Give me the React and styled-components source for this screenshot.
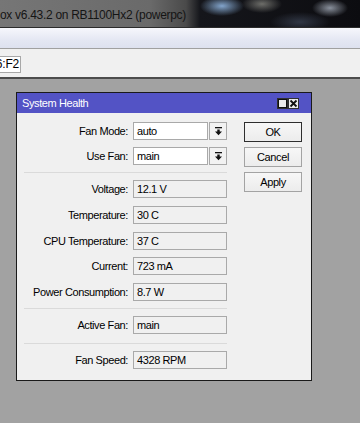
import React from 'react';
import styled, { createGlobalStyle } from 'styled-components';

const GlobalStyle = createGlobalStyle`
html, body {
    margin: 0;
    padding: 0;
    background: #a2a2a2;
    overflow: hidden;
}
* {
    box-sizing: border-box;
}
`;

const Page = styled.div`
display: flex;
flex-direction: column;
width: 360px;
height: 423px;
overflow: hidden;
font-family: "Liberation Sans", Arial, sans-serif;
font-size: 11px;
letter-spacing: -0.4px;
color: #000;
`;

const WinTitle = styled.div`
height: 27px;
display: flex;
align-items: center;
white-space: nowrap;
overflow: hidden;
font-size: 12px;
letter-spacing: -0.3px;
color: #151515;
background:
    radial-gradient(ellipse 22px 10px at 222px 6px, rgba(150, 190, 235, 0.85), transparent),
    radial-gradient(ellipse 20px 9px at 262px 4px, rgba(170, 170, 160, 0.6), transparent),
    radial-gradient(ellipse 18px 9px at 330px 8px, rgba(190, 200, 215, 0.7), transparent),
    radial-gradient(ellipse 30px 10px at 300px 22px, rgba(70, 80, 100, 0.6), transparent),
    linear-gradient(90deg, #767676 0, #6a6a6a 150px, #4a4a4a 186px, #15161b 200px, #0c0c10 100%);
span {
    padding-top: 2px;
}
`;

const Rule = styled.div`
height: ${p => p.$h || 1}px;
background: ${p => p.$color};
`;

const MenuBar = styled.div`
height: 20px;
background: linear-gradient(#f6f7fc, #e4e7f3 60%, #dde1ef);
`;

const Toolbar = styled.div`
height: 28px;
background: #f0f0f0;
padding-top: 7px;
`;

const AddrBox = styled.div`
width: 21px;
height: 17px;
background: #fff;
border: 1px solid #a8a8a8;
border-left: none;
display: flex;
justify-content: flex-end;
padding-right: 1px;
font-size: 12px;
letter-spacing: -0.2px;
line-height: 15px;
white-space: nowrap;
overflow: hidden;
span {
    flex-shrink: 0;
}
`;

const Desktop = styled.div`
flex: 1;
background: #a2a2a2;
padding: 13px 0 0 16px;
`;

const Dialog = styled.div`
width: 296px;
border: 1px solid #1a1a1a;
background: #f0f0f0;
`;

const TitleBar = styled.div`
height: 20px;
background: #5353c5;
color: #fff;
display: flex;
align-items: center;
padding: 0 12px 0 5px;
font-size: 11px;
`;

const TitleText = styled.div`
flex: 1;
`;

const TitleButton = styled.div`
width: 11px;
height: 11px;
background: #ececec;
border: 1px solid #303030;
display: flex;
align-items: center;
justify-content: center;
svg {
    display: block;
}
`;

const Body = styled.div`
display: flex;
padding-bottom: 11px;
`;

const FormColumn = styled.div`
width: 211px;
display: flex;
flex-direction: column;
`;

const Section = styled.div`
display: flex;
flex-direction: column;
gap: ${p => p.$gap || 7}px;
padding: ${p => p.$pt}px 0 ${p => p.$pb}px;
`;

const Separator = styled.div`
height: 1px;
margin-left: 7px;
width: 203px;
background: #dadada;
`;

const Row = styled.div`
display: flex;
align-items: center;
height: 18px;
`;

const Label = styled.div`
width: 112px;
text-align: right;
padding-right: 1px;
margin-right: 4px;
white-space: nowrap;
`;

const Field = styled.div`
width: ${p => p.$w || 94}px;
height: 18px;
border: 1px solid #a9a9a9;
background: ${p => (p.$editable ? '#fff' : '#f0f0f0')};
padding-left: 3px;
line-height: 16px;
white-space: nowrap;
overflow: hidden;
`;

const DropButton = styled.div`
width: 18px;
height: 18px;
margin-left: 1px;
border: 1px solid #a9a9a9;
background: #f2f2f2;
display: flex;
align-items: center;
justify-content: center;
`;

const ButtonColumn = styled.div`
display: flex;
flex-direction: column;
gap: 5px;
margin-left: 16px;
padding-top: 9px;
`;

const Button = styled.div`
width: 58px;
height: 20px;
border: 1px solid ${p => (p.$default ? '#2e2e2e' : '#a3a3a3')};
background: linear-gradient(#f7f7f7, #ececec);
display: flex;
align-items: center;
justify-content: center;
font-size: 11px;
`;

const DropArrow = () => (
    <svg width="9" height="9" viewBox="0 0 9 9">
        <rect x="1" y="0" width="7" height="1.3" fill="#111" />
        <path d="M3.3 2.4h2.4v2.1H8L4.5 8.2 1 4.5h2.3z" fill="#111" />
    </svg>
);

const Select = ({ value }) => (
    <>
        <Field $w={75} $editable>{value}</Field>
        <DropButton><DropArrow /></DropButton>
    </>
);

const healthRows = [
    ['Voltage:', '12.1 V'],
    ['Temperature:', '30 C'],
    ['CPU Temperature:', '37 C'],
    ['Current:', '723 mA'],
    ['Power Consumption:', '8.7 W'],
];

export default function App() {
    return (
        <Page>
            <GlobalStyle />
            <WinTitle><span>ox v6.43.2 on RB1100Hx2 (powerpc)</span></WinTitle>
            <Rule $color="#2b2b2b" />
            <MenuBar />
            <Rule $color="#a0a0a0" />
            <Toolbar>
                <AddrBox><span>6:F2</span></AddrBox>
            </Toolbar>
            <Rule $h={2} $color="#4c4c4c" />
            <Desktop>
                <Dialog>
                    <TitleBar>
                        <TitleText>System Health</TitleText>
                        <TitleButton>
                            <svg width="9" height="9" viewBox="0 0 9 9">
                                <rect x="0.5" y="0.5" width="8" height="8" fill="none" stroke="#111" />
                            </svg>
                        </TitleButton>
                        <TitleButton>
                            <svg width="9" height="9" viewBox="0 0 9 9">
                                <path d="M1.5 1.5l6 6M7.5 1.5l-6 6" stroke="#111" strokeWidth="1.8" />
                            </svg>
                        </TitleButton>
                    </TitleBar>
                    <Body>
                        <FormColumn>
                            <Section $pt={9} $pb={7}>
                                <Row><Label>Fan Mode:</Label><Select value="auto" /></Row>
                                <Row><Label>Use Fan:</Label><Select value="main" /></Row>
                            </Section>
                            <Separator />
                            <Section $pt={7} $pb={7} $gap={7.75}>
                                {healthRows.map(([label, value]) => (
                                    <Row key={label}><Label>{label}</Label><Field>{value}</Field></Row>
                                ))}
                            </Section>
                            <Separator />
                            <Section $pt={7} $pb={9}>
                                <Row><Label>Active Fan:</Label><Field>main</Field></Row>
                            </Section>
                            <Separator />
                            <Section $pt={7} $pb={0}>
                                <Row><Label>Fan Speed:</Label><Field>4328 RPM</Field></Row>
                            </Section>
                        </FormColumn>
                        <ButtonColumn>
                            <Button $default>OK</Button>
                            <Button>Cancel</Button>
                            <Button>Apply</Button>
                        </ButtonColumn>
                    </Body>
                </Dialog>
            </Desktop>
        </Page>
    );
}
